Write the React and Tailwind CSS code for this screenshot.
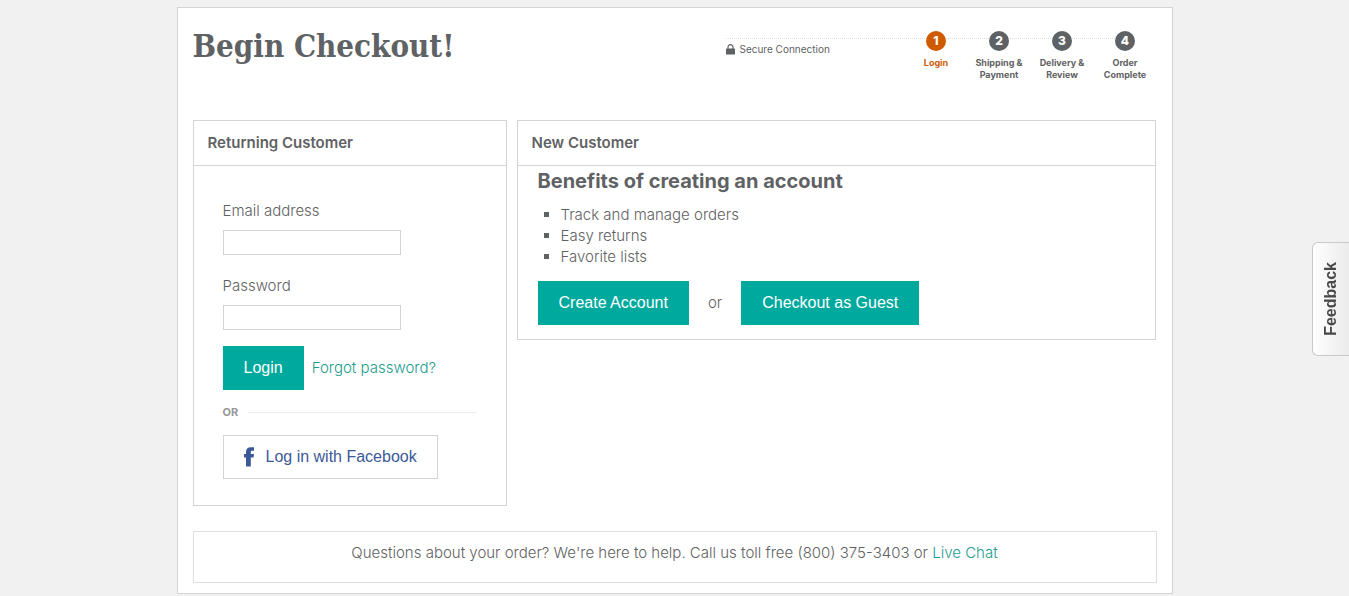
import React from "react";

const steps = [
  { label: "Login", active: true },
  { label: "Shipping & Payment" },
  { label: "Delivery & Review" },
  { label: "Order Complete" },
];

const primaryButton =
  "h-11 cursor-pointer bg-[#00a99d] px-[21px] font-['Liberation_Sans',Arial,sans-serif] text-base text-white hover:bg-[#00978c]";

function LockIcon() {
  return (
    <svg viewBox="0 0 9 11" className="h-[11px] w-[9px] shrink-0" aria-hidden="true">
      <path d="M2 5V3.2a2.5 2.5 0 0 1 5 0V5" fill="none" stroke="#5f6264" strokeWidth="1.2" />
      <rect x="0" y="4.4" width="9" height="6.2" rx="0.6" fill="#5f6264" />
    </svg>
  );
}

function FacebookIcon() {
  return (
    <svg viewBox="0 0 10 20" className="h-5 w-[10px] shrink-0" aria-hidden="true">
      <path
        d="M2 19.5V10.4H0V7h2V4.9C2 1.8 3.6 0.2 6.8 0.2H10v3.5H8C7 3.7 6.8 4.2 6.8 5v2H10l-.4 3.4H6.8v9.1z"
        fill="#3b5998"
      />
    </svg>
  );
}

function Progress() {
  return (
    <div className="relative flex w-[431px] justify-between pt-2">
      <div className="absolute top-[15px] right-8 left-0 border-t border-dotted border-[#dcdcdc]" />
      <p className="mt-[10px] flex h-4 items-center gap-[5px] self-start text-[10px] leading-4 font-normal">
        <LockIcon />
        Secure Connection
      </p>
      <ol className="relative flex">
        {steps.map((step, i) => (
          <li
            key={step.label}
            className={
              "flex w-[63px] flex-col items-center gap-[6px] px-1 text-center text-[9px] leading-3 font-bold " +
              (step.active ? "text-[#cc5a0a]" : "text-[#5f6264]")
            }
          >
            <span
              className={
                "flex size-5 items-center justify-center rounded-full text-xs font-extrabold text-white " +
                (step.active ? "bg-[#d05a00]" : "bg-[#5f6264]")
              }
            >
              {i + 1}
            </span>
            {step.label}
          </li>
        ))}
      </ol>
    </div>
  );
}

function Panel({ title, className, children }) {
  return (
    <section className={"border border-[#d4d4d4] " + className}>
      <h2 className="border-b border-[#d4d4d4] px-[14px] py-3 text-[15px] leading-5 font-semibold">{title}</h2>
      {children}
    </section>
  );
}

function Field({ id, label, type }) {
  return (
    <div className="flex flex-col items-start gap-[9px]">
      <label htmlFor={id} className="leading-5">
        {label}
      </label>
      <input id={id} type={type} className="h-[25px] w-[178px] border border-[#d4d4d4] bg-white px-2 text-sm" />
    </div>
  );
}

export default function App() {
  return (
    <div className="min-h-screen bg-[#f1f1f1] pt-[7px] pb-[2px] font-[Inter,sans-serif] text-[15px] font-light text-[#5f6264]">
      <main className="mx-auto max-w-[996px] border border-[#d4d4d4] bg-white px-[15px] pt-[15px] pb-[10px]">
        <header className="flex h-[97px] items-start justify-between">
          <h1 className="font-['DejaVu_Serif_Condensed','DejaVu_Serif',serif] text-[31px] leading-[46px] font-bold">
            Begin Checkout!
          </h1>
          <Progress />
        </header>

        <div className="flex items-start gap-[10px] pr-px">
          <Panel title="Returning Customer" className="w-[314px] shrink-0">
            <form className="px-[29px] pt-[35px] pb-[26px]" onSubmit={(e) => e.preventDefault()}>
              <div className="flex flex-col gap-[21px]">
                <Field id="email" label="Email address" type="email" />
                <Field id="password" label="Password" type="password" />
              </div>
              <div className="mt-4 flex items-center gap-2">
                <button type="submit" className={primaryButton}>
                  Login
                </button>
                <a href="#forgot" className="text-[#1c9c8c] hover:underline">
                  Forgot password?
                </a>
              </div>
              <div className="mt-[14px] flex items-center gap-[10px] text-[11px] leading-4 font-bold text-[#999999]">
                OR
                <span className="flex-1 border-t border-[#ececec]" />
              </div>
              <button
                type="button"
                className="mt-[15px] flex h-11 cursor-pointer items-center gap-3 border border-[#d4d4d4] bg-white px-5 font-['Liberation_Sans',Arial,sans-serif] text-base text-[#3b5998]"
              >
                <FacebookIcon />
                Log in with Facebook
              </button>
            </form>
          </Panel>

          <Panel title="New Customer" className="flex-1">
            <div className="px-5 pb-[14px]">
              <h3 className="text-xl leading-[30px] font-bold">Benefits of creating an account</h3>
              <ul className="mt-2 leading-[21px]">
                {["Track and manage orders", "Easy returns", "Favorite lists"].map((t) => (
                  <li key={t} className="flex items-center gap-3 pl-[6px]">
                    <span className="size-[5px] bg-[#5f6264]" />
                    {t}
                  </li>
                ))}
              </ul>
              <div className="mt-[14px] flex items-center">
                <button type="button" className={primaryButton}>
                  Create Account
                </button>
                <span className="px-[19px]">or</span>
                <button type="button" className={primaryButton}>
                  Checkout as Guest
                </button>
              </div>
            </div>
          </Panel>
        </div>

        <footer className="mt-[25px] border border-[#dedede] pt-[11px] pb-[19px] text-center leading-5">
          Questions about your order? We're here to help. Call us toll free (800) 375-3403 or{" "}
          <a href="#chat" className="text-[#1c9c8c] hover:underline">
            Live Chat
          </a>
        </footer>
      </main>

      <button
        type="button"
        className="fixed top-[242px] right-0 flex h-[114px] w-[37px] cursor-pointer items-center justify-center rounded-l-md border border-r-0 border-[#c8c8c8] bg-linear-to-r from-white to-[#ebebeb] font-['Liberation_Sans',Arial,sans-serif] text-base font-bold text-[#484848]"
      >
        <span className="rotate-180 [writing-mode:vertical-rl]">Feedback</span>
      </button>
    </div>
  );
}
